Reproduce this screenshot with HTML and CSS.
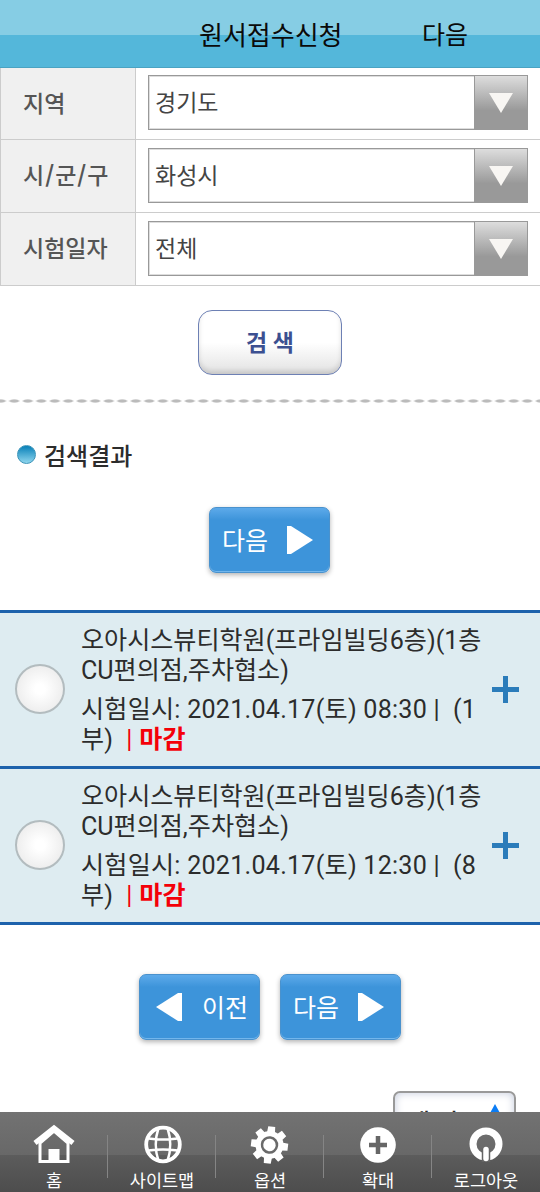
FILE: index.html
```html
<!DOCTYPE html>
<html lang="ko">
<head>
    <meta charset="UTF-8">
    <title>원서접수신청</title>
    <link rel="stylesheet" href="styles.css">
</head>
<body>
    <header class="header">
        <h1>원서접수신청</h1>
        <a class="header-next">다음</a>
    </header>

    <main class="content">
        <div class="search-form">
            <div class="form-row">
                <div class="label">지역</div>
                <div class="field">
                    <div class="select"><span>경기도</span><i><svg width="26" height="22" viewBox="0 0 26 22"><path d="M1 1h24L13 21z" fill="#f8f6f3"/></svg></i></div>
                </div>
            </div>
            <div class="form-row">
                <div class="label">시<b>/</b>군<b>/</b>구</div>
                <div class="field">
                    <div class="select"><span>화성시</span><i><svg width="26" height="22" viewBox="0 0 26 22"><path d="M1 1h24L13 21z" fill="#f8f6f3"/></svg></i></div>
                </div>
            </div>
            <div class="form-row">
                <div class="label">시험일자</div>
                <div class="field">
                    <div class="select"><span>전체</span><i><svg width="26" height="22" viewBox="0 0 26 22"><path d="M1 1h24L13 21z" fill="#f8f6f3"/></svg></i></div>
                </div>
            </div>
        </div>

        <button class="btn-search">검 색</button>
        <div class="divider"></div>

        <h2 class="result-title"><span class="bullet"></span>검색결과</h2>

        <div class="pager pager-top">
            <button class="btn-page next"><span>다음</span><svg width="26" height="28" viewBox="0 0 26 28"><path d="M0 0h4l22 14L4 28H0z" fill="#fff"/></svg></button>
        </div>

        <ul class="result-list">
            <li>
                <span class="radio"></span>
                <div class="info">
                    <p>오아시스뷰티학원(프라임빌딩6층)(1층<br>CU편의점,주차협소)</p>
                    <p class="date">시험일시: 2021.04.17(토) 08:30 |&nbsp; (1<br>부)&nbsp; <em>| <b>마감</b></em></p>
                </div>
                <span class="plus"></span>
            </li>
            <li>
                <span class="radio"></span>
                <div class="info">
                    <p>오아시스뷰티학원(프라임빌딩6층)(1층<br>CU편의점,주차협소)</p>
                    <p class="date">시험일시: 2021.04.17(토) 12:30 |&nbsp; (8<br>부)&nbsp; <em>| <b>마감</b></em></p>
                </div>
                <span class="plus"></span>
            </li>
        </ul>

        <div class="pager pager-bottom">
            <button class="btn-page prev"><svg width="26" height="28" viewBox="0 0 26 28"><path d="M26 0h-4L0 14l22 14h4z" fill="#fff"/></svg><span>이전</span></button>
            <button class="btn-page next"><span>다음</span><svg width="26" height="28" viewBox="0 0 26 28"><path d="M0 0h4l22 14L4 28H0z" fill="#fff"/></svg></button>
        </div>

        <a class="btn-top"><span>맨 위</span><svg width="22" height="20" viewBox="0 0 22 20"><path d="M11 0l11 20H0z" fill="#0a7cf5"/></svg></a>
    </main>

    <footer class="tabbar">
        <a>
            <svg width="42" height="40" viewBox="0 0 42 40">
                <path d="M7 19v18.500h28V19L21 7z" fill="none" stroke="#fff" stroke-width="3"/>
                <path d="M2 19L21 4l19 15" fill="none" stroke="#fff" stroke-width="5"/>
                <path d="M15.500 25h11v13h-11z" fill="#fff"/>
            </svg>
            <span>홈</span>
        </a>
        <a>
            <svg width="42" height="40" viewBox="0 0 42 40" fill="none" stroke="#fff" stroke-width="2.500">
                <circle cx="22" cy="20.500" r="16.800" stroke-width="3.800"/>
                <path d="M17.500 4q-5.500 16.500 0 33M26.500 4q5.500 16.500 0 33M7.500 14.500q14.500 2 29 0M7.500 26.500q14.500-2 29 0"/>
            </svg>
            <span>사이트맵</span>
        </a>
        <a>
            <svg width="42" height="40" viewBox="0 0 42 40">
                <g transform="translate(20.500 21) rotate(7)" fill="#fff">
                    <circle r="14"/>
                    <path d="M-4-12l.5-6.500h7l.5 6.500zM-4 12l.5 6.500h7l.5-6.500z"/>
                    <path d="M-4-12l.5-6.500h7l.5 6.500zM-4 12l.5 6.500h7l.5-6.500z" transform="rotate(45)"/>
                    <path d="M-4-12l.5-6.500h7l.5 6.500zM-4 12l.5 6.500h7l.5-6.500z" transform="rotate(90)"/>
                    <path d="M-4-12l.5-6.500h7l.5 6.500zM-4 12l.5 6.500h7l.5-6.500z" transform="rotate(135)"/>
                    <circle r="7.500" stroke="#6a6a6a" stroke-width="2.500"/>
                </g>
            </svg>
            <span>옵션</span>
        </a>
        <a>
            <svg width="42" height="40" viewBox="0 0 42 40">
                <circle cx="21" cy="21" r="17.800" fill="#fff"/>
                <path d="M21 12v18M12 21h18" stroke="#666" stroke-width="4.500"/>
            </svg>
            <span>확대</span>
        </a>
        <a>
            <svg width="42" height="40" viewBox="0 0 42 40">
                <circle cx="21" cy="20" r="13" fill="none" stroke="#fff" stroke-width="7"/>
                <path d="M21 24v14" stroke="#656565" stroke-width="8.500"/>
                <path d="M21 25.500v9" stroke="#fff" stroke-width="5.500" stroke-linecap="round"/>
            </svg>
            <span>로그아웃</span>
        </a>
    </footer>
</body>
</html>
```

FILE: styles.css
```css
* {
    box-sizing: border-box;
}
body {
    margin: 0;
    height: 1192px;
    display: flex;
    flex-direction: column;
    overflow: hidden;
    background: #fff;
    color: #2c2c2c;
    font-family: Roboto, "Noto Sans CJK KR", sans-serif;
    font-size: 25px;
}
h1, h2, p, ul {
    margin: 0;
    padding: 0;
    font-weight: normal;
}
button {
    font-family: inherit;
    padding: 0;
}
svg {
    display: block;
    flex-shrink: 0;
}

/* header */
.header {
    height: 68px;
    flex-shrink: 0;
    display: grid;
    grid-template-columns: 199px 223px 1fr;
    grid-template-rows: 67px;
    align-items: center;
    background: linear-gradient(#86cde4 35px, #54b7da 35px);
    border-bottom: 1px solid #4aa3c2;
    color: #0a0a0a;
}
.header h1 {
    grid-column: 2;
    font-size: 26px;
    padding-bottom: 1px;
}
.header-next {
    padding-bottom: 2px;
}

.content {
    flex: 1;
    min-height: 0;
    overflow: hidden;
    display: flex;
    flex-direction: column;
}
.content > * {
    flex-shrink: 0;
}

/* search form */
.form-row {
    display: flex;
    height: 73px;
    border-bottom: 1px solid #ccc;
}
.form-row:first-child {
    height: 72px;
}
.label {
    width: 136px;
    padding: 0 0 4px 22px;
    display: flex;
    align-items: center;
    background: #f0f0f0;
    border-left: 1px solid #ccc;
    border-right: 1px solid #ccc;
    color: #555;
    font-family: "Noto Sans CJK KR", sans-serif;
    font-size: 23px;
    font-weight: 500;
}
.label b {
    padding: 0 1px;
}
.field {
    flex: 1;
    display: flex;
    align-items: flex-start;
    padding: 8px 12px 0;
}
.form-row:first-child .field {
    padding-top: 7px;
}
.select {
    flex: 1;
    height: 55px;
    display: flex;
    align-items: center;
    justify-content: space-between;
    border: 1px solid #999;
    box-shadow: inset 0 0 0 1px #ddd;
    padding-left: 6px;
    color: #444;
    font-size: 23px;
}
.select span {
    padding-bottom: 4px;
}
.select i {
    width: 53px;
    height: 53px;
    display: flex;
    align-items: center;
    justify-content: center;
    border-left: 1px solid #999;
    background: linear-gradient(#ddd, #999 65%);
}

.btn-search {
    align-self: center;
    width: 144px;
    height: 65px;
    margin-top: 24px;
    padding-bottom: 4px;
    border: 1.5px solid #6d80b4;
    border-radius: 14px;
    background: linear-gradient(#fff 50%, #e2e2e2);
    box-shadow: inset 0 -3px 5px rgba(0,0,0,0.13);
    color: #3c5091;
    font-size: 23px;
    font-weight: 700;
}
.divider {
    height: 4px;
    margin-top: 24px;
    background: radial-gradient(ellipse 6px 2px at center, #bbb 60%, transparent) -6px 0 / 13.500px 4px repeat-x;
}

.result-title {
    display: flex;
    align-items: center;
    gap: 8px;
    height: 36px;
    margin-top: 33px;
    padding-left: 17px;
    font-size: 24px;
    font-weight: 500;
}
.bullet {
    width: 19px;
    height: 19px;
    border-radius: 50%;
    border: 1px solid #3a93b8;
    background: linear-gradient(#0880b8, #8fd6ee);
}

/* prev / next buttons */
.pager {
    display: flex;
    justify-content: center;
    gap: 20px;
}
.pager-top {
    margin-top: 35px;
    padding-right: 1px;
}
.pager-bottom {
    margin-top: 49px;
}
.btn-page {
    width: 121px;
    height: 66px;
    display: flex;
    align-items: center;
    justify-content: space-between;
    border: 1px solid #4a92cd;
    border-radius: 7px;
    background: linear-gradient(#5daaea, #3d94da 12px);
    box-shadow: 0 2px 5px rgba(0,0,0,0.3), inset 0 -1px 0 #72b6ec;
    color: #fff;
    font-size: 25px;
}
.btn-page span {
    padding-bottom: 3px;
}
.btn-page.next {
    padding: 0 16px 0 12px;
}
.btn-page.prev {
    padding: 0 11px 0 16px;
}

/* result list */
.result-list {
    margin-top: 37px;
    list-style: none;
    border-top: 3px solid #1d62ac;
}
.result-list li {
    display: flex;
    align-items: center;
    height: 156px;
    padding: 0 21px 0 15px;
    background: #deecf1;
    border-bottom: 3px solid #1d62ac;
}
.radio {
    width: 50px;
    height: 50px;
    margin: -2px 16px 0 0;
    border: 2px solid #b3bcbf;
    border-radius: 50%;
    background: radial-gradient(#fff 15%, #ededed 75%);
}
.info {
    flex: 1;
    padding-top: 2px;
    font-size: 25.100px;
    line-height: 30.500px;
    white-space: nowrap;
}
.info .date {
    margin-top: 8px;
    letter-spacing: 0.250px;
}
.info em {
    color: #f40009;
    font-style: normal;
}
.info b {
    font-weight: 700;
}
.plus {
    width: 27px;
    height: 27px;
    background:
        linear-gradient(#2b7cba, #2b7cba) center / 27px 5px no-repeat,
        linear-gradient(#2b7cba, #2b7cba) center / 5px 27px no-repeat;
}

.btn-top {
    align-self: flex-end;
    display: flex;
    align-items: flex-start;
    justify-content: space-between;
    width: 123px;
    height: 60px;
    margin: 51px 24px 0 0;
    padding: 11px 8px 0 13px;
    border: 2px solid #999;
    border-radius: 7px;
    box-shadow: inset 0 0 8px #c4cbdc;
    font-size: 24px;
    font-weight: 500;
    line-height: 24px;
}
.btn-top span {
    margin-top: 7px;
}

/* bottom menu */
.tabbar {
    height: 80px;
    flex-shrink: 0;
    display: grid;
    grid-template-columns: repeat(5, 1fr);
    background: linear-gradient(#727272, #686868 43px, #5c5c5c 43px, #4d4d4d);
    color: #fff;
    font-size: 17.500px;
}
.tabbar a {
    display: flex;
    flex-direction: column;
    align-items: center;
    padding-top: 12px;
    background: linear-gradient(#858585, #858585) right 23px / 1px 43px no-repeat;
}
.tabbar a:last-child {
    background: none;
}
.tabbar span {
    margin-top: 7px;
    line-height: 20px;
}
```
